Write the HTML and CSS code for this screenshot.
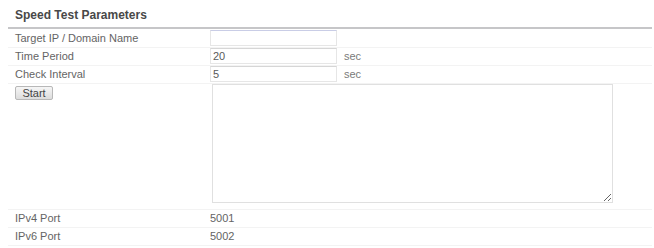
FILE: index.html
```html
<!DOCTYPE html>
<html lang="en">
<head>
  <meta charset="UTF-8">
  <title>Speed Test</title>
  <link rel="stylesheet" href="styles.css">
</head>
<body>
  <div class="panel">
    <h2 class="panel-title">Speed Test Parameters</h2>
    <table class="params">
      <tr>
        <td class="label">Target IP / Domain Name</td>
        <td class="value"><input type="text" class="field field-target"></td>
        <td></td>
      </tr>
      <tr>
        <td class="label">Time Period</td>
        <td class="value"><input type="text" class="field" value="20"></td>
        <td class="unit">sec</td>
      </tr>
      <tr>
        <td class="label">Check Interval</td>
        <td class="value"><input type="text" class="field" value="5"></td>
        <td class="unit">sec</td>
      </tr>
      <tr class="result-row">
        <td class="label"><button class="start-btn">Start</button></td>
        <td class="value" colspan="2"><textarea class="result"></textarea></td>
      </tr>
      <tr>
        <td class="label">IPv4 Port</td>
        <td class="value" colspan="2">5001</td>
      </tr>
      <tr>
        <td class="label">IPv6 Port</td>
        <td class="value" colspan="2">5002</td>
      </tr>
    </table>
  </div>
</body>
</html>
```

FILE: styles.css
```css
* {
  margin: 0;
  padding: 0;
  box-sizing: border-box;
}

body {
  background: #fff;
  font-family: 'Liberation Sans', Arial, sans-serif;
  font-size: 11px;
  color: #646464;
}

.panel {
  margin-left: 8px;
  width: 644px;
}

/* Title bar */
.panel-title {
  font-size: 12px;
  font-weight: bold;
  color: #484848;
  line-height: 14px;
  padding: 8px 7px 5px;
  border-bottom: 2px solid #c6c6c8;
}

.params {
  width: 100%;
  border-collapse: collapse;
}

.params td {
  height: 18px;
  border-bottom: 1px solid #f3f3f3;
  vertical-align: middle;
}

.params td.label {
  width: 202px;
  padding-left: 7px;
}

.params td.value {
  width: 133px;
}

.params td.unit {
  padding-left: 1px;
  color: #7a7a7a;
}

/* Inputs */
.field {
  width: 127px;
  height: 16px;
  padding: 0 2px;
  border: 1px solid #e6e6e6;
  border-top-color: #d6d6d6;
  font-family: 'Liberation Sans', Arial, sans-serif;
  font-size: 11px;
  color: #5a5a5a;
  display: block;
}

.field-target {
  border-top-color: #c9cde6;
}

.result-row td {
  vertical-align: top;
  padding-bottom: 6px;
}

.start-btn {
  margin-top: 2px;
  width: 38px;
  height: 14px;
  font-family: 'Liberation Sans', Arial, sans-serif;
  font-size: 11px;
  color: #444;
  background: linear-gradient(#f6f6f6, #dcdcdc);
  border: 1px solid #b8b8b8;
  border-radius: 2px;
  line-height: 12px;
}

.result {
  display: block;
  width: 401px;
  height: 119px;
  margin-left: 2px;
  border: 1px solid #e0e0e0;
  resize: both;
}
```
